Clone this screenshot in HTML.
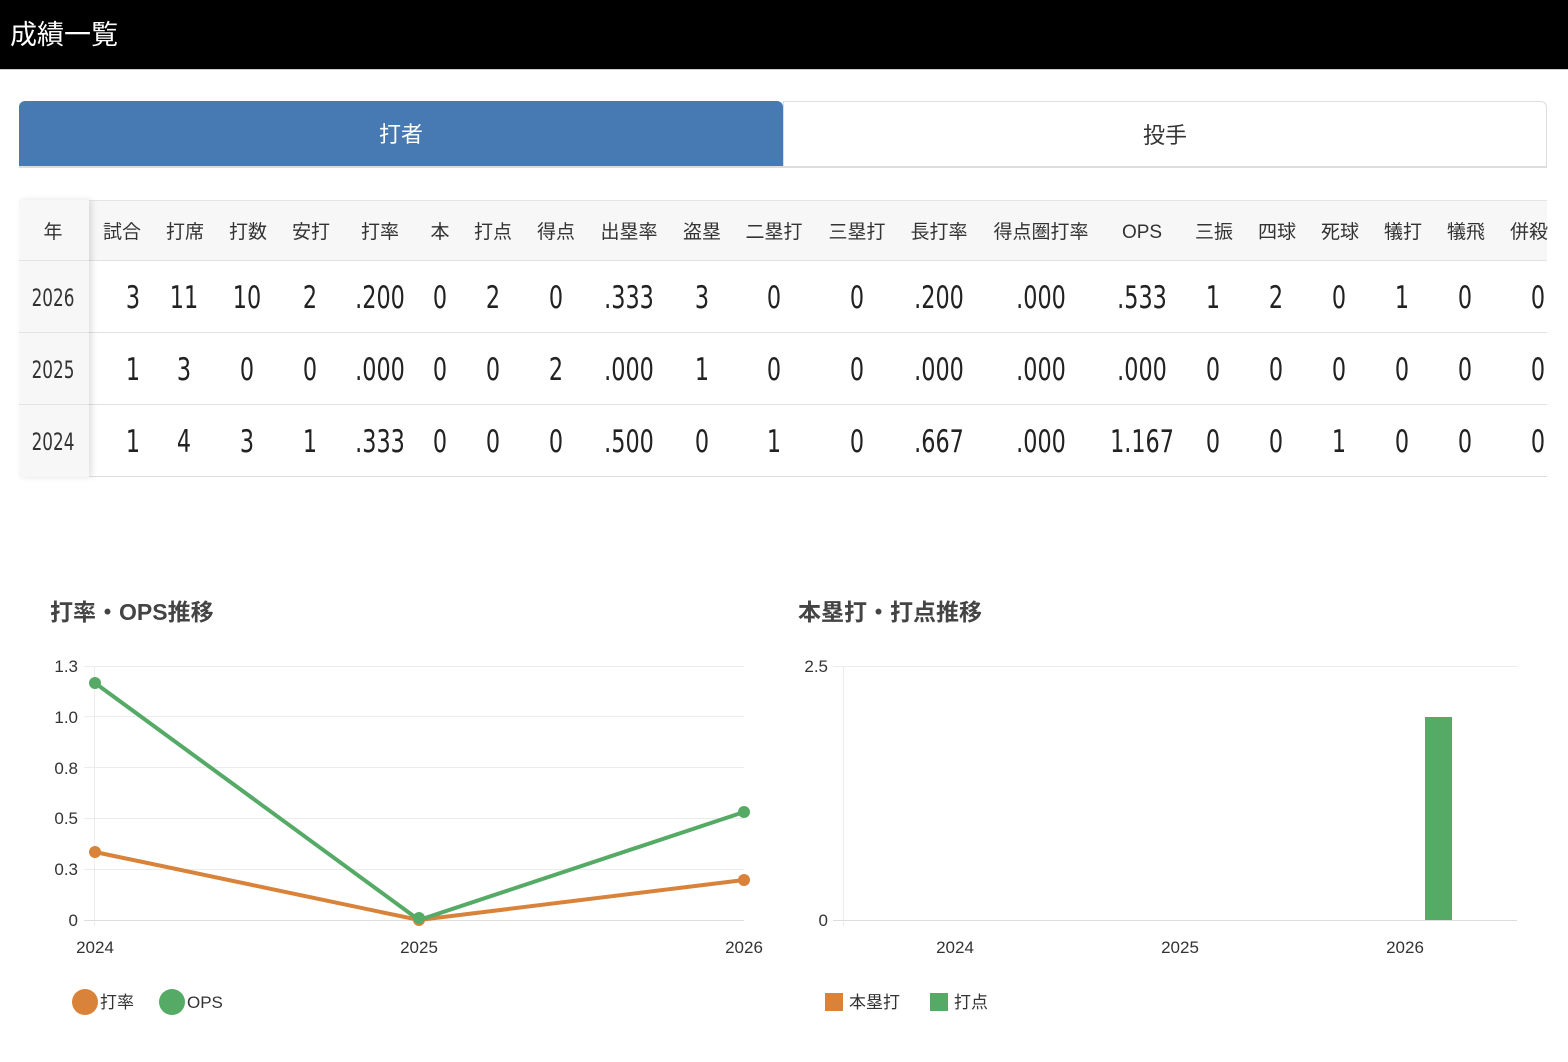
<!DOCTYPE html>
<html><head><meta charset="utf-8"><style>
*{margin:0;padding:0;box-sizing:border-box}
body{width:1568px;height:1062px;background:#fff;position:relative;overflow:hidden;font-family:"Liberation Sans","Noto Sans CJK JP",sans-serif;color:#333}
.top{position:absolute;left:0;top:0;width:1568px;height:70px;background:#000;border-bottom:1px solid #ccc}
.top span{position:absolute;left:10px;top:13px;color:#fff;font-size:27px}
.tab{position:absolute;top:101px;height:67px;font-size:22px;text-align:center;line-height:67px}
.a{position:absolute;white-space:nowrap;transform:translateX(-50%)}
.h{top:217px;font-size:19px;color:#333}
.n{font-family:"DejaVu Sans Condensed","DejaVu Sans",sans-serif;font-size:31px;color:#222;transform:translateX(-50%) scaleX(0.8)}
.y{font-family:"DejaVu Sans Condensed","DejaVu Sans",sans-serif;font-size:24px;color:#333;transform:translateX(-50%) scaleX(0.78)}
.line{position:absolute;left:19px;width:1528px;height:1px;background:#e2e2e2}
</style></head><body>
<div class="top"><span>成績一覧</span></div>
<div class="tab" style="left:19px;width:764px;background:#4779b2;color:#fff;border-radius:6px 6px 0 0;border-bottom:2px solid #ddd">打者</div>
<div class="tab" style="left:783px;width:764px;border:1px solid #ddd;border-bottom:2px solid #ddd;border-radius:0 6px 0 0;color:#333">投手</div>

<div style="position:absolute;left:19px;top:200px;width:1528px;height:60px;background:#f7f7f7;border-top:1px solid #e5e5e5"></div>
<div class="line" style="top:260px"></div>
<div class="line" style="top:332px"></div>
<div class="line" style="top:404px"></div>
<div class="line" style="top:476px;background:#ddd"></div>
<div style="position:absolute;left:19px;top:200px;width:70px;height:277px;background:#f7f7f7;box-shadow:3px 0 6px rgba(0,0,0,0.12)"></div>
<div style="position:absolute;left:19px;top:260px;width:70px;height:1px;background:#e2e2e2"></div>
<div style="position:absolute;left:19px;top:332px;width:70px;height:1px;background:#e2e2e2"></div>
<div style="position:absolute;left:19px;top:404px;width:70px;height:1px;background:#e2e2e2"></div>

<div class="a h" style="left:53px">年</div>
<div class="a h" style="left:122px">試合</div>
<div class="a h" style="left:185px">打席</div>
<div class="a h" style="left:248px">打数</div>
<div class="a h" style="left:311px">安打</div>
<div class="a h" style="left:380px">打率</div>
<div class="a h" style="left:440px">本</div>
<div class="a h" style="left:493px">打点</div>
<div class="a h" style="left:556px">得点</div>
<div class="a h" style="left:629px">出塁率</div>
<div class="a h" style="left:702px">盗塁</div>
<div class="a h" style="left:774px">二塁打</div>
<div class="a h" style="left:857px">三塁打</div>
<div class="a h" style="left:939px">長打率</div>
<div class="a h" style="left:1041px">得点圏打率</div>
<div class="a h" style="left:1142px;top:222px">OPS</div>
<div class="a h" style="left:1214px">三振</div>
<div class="a h" style="left:1277px">四球</div>
<div class="a h" style="left:1340px">死球</div>
<div class="a h" style="left:1403px">犠打</div>
<div class="a h" style="left:1466px">犠飛</div>
<div class="a h" style="left:1529px">併殺</div>

<div class="a y" style="left:53px;top:284px">2026</div>
<div class="a y" style="left:53px;top:356px">2025</div>
<div class="a y" style="left:53px;top:428px">2024</div>

<!-- row 2026 -->
<div class="a n" style="top:280px;left:133px">3</div><div class="a n" style="top:280px;left:184px">11</div><div class="a n" style="top:280px;left:247px">10</div><div class="a n" style="top:280px;left:310px">2</div><div class="a n" style="top:280px;left:380px">.200</div><div class="a n" style="top:280px;left:440px">0</div><div class="a n" style="top:280px;left:493px">2</div><div class="a n" style="top:280px;left:556px">0</div><div class="a n" style="top:280px;left:629px">.333</div><div class="a n" style="top:280px;left:702px">3</div><div class="a n" style="top:280px;left:774px">0</div><div class="a n" style="top:280px;left:857px">0</div><div class="a n" style="top:280px;left:939px">.200</div><div class="a n" style="top:280px;left:1041px">.000</div><div class="a n" style="top:280px;left:1142px">.533</div><div class="a n" style="top:280px;left:1213px">1</div><div class="a n" style="top:280px;left:1276px">2</div><div class="a n" style="top:280px;left:1339px">0</div><div class="a n" style="top:280px;left:1402px">1</div><div class="a n" style="top:280px;left:1465px">0</div><div class="a n" style="top:280px;left:1538px">0</div>
<!-- row 2025 -->
<div class="a n" style="top:352px;left:133px">1</div><div class="a n" style="top:352px;left:184px">3</div><div class="a n" style="top:352px;left:247px">0</div><div class="a n" style="top:352px;left:310px">0</div><div class="a n" style="top:352px;left:380px">.000</div><div class="a n" style="top:352px;left:440px">0</div><div class="a n" style="top:352px;left:493px">0</div><div class="a n" style="top:352px;left:556px">2</div><div class="a n" style="top:352px;left:629px">.000</div><div class="a n" style="top:352px;left:702px">1</div><div class="a n" style="top:352px;left:774px">0</div><div class="a n" style="top:352px;left:857px">0</div><div class="a n" style="top:352px;left:939px">.000</div><div class="a n" style="top:352px;left:1041px">.000</div><div class="a n" style="top:352px;left:1142px">.000</div><div class="a n" style="top:352px;left:1213px">0</div><div class="a n" style="top:352px;left:1276px">0</div><div class="a n" style="top:352px;left:1339px">0</div><div class="a n" style="top:352px;left:1402px">0</div><div class="a n" style="top:352px;left:1465px">0</div><div class="a n" style="top:352px;left:1538px">0</div>
<!-- row 2024 -->
<div class="a n" style="top:424px;left:133px">1</div><div class="a n" style="top:424px;left:184px">4</div><div class="a n" style="top:424px;left:247px">3</div><div class="a n" style="top:424px;left:310px">1</div><div class="a n" style="top:424px;left:380px">.333</div><div class="a n" style="top:424px;left:440px">0</div><div class="a n" style="top:424px;left:493px">0</div><div class="a n" style="top:424px;left:556px">0</div><div class="a n" style="top:424px;left:629px">.500</div><div class="a n" style="top:424px;left:702px">0</div><div class="a n" style="top:424px;left:774px">1</div><div class="a n" style="top:424px;left:857px">0</div><div class="a n" style="top:424px;left:939px">.667</div><div class="a n" style="top:424px;left:1041px">.000</div><div class="a n" style="top:424px;left:1142px">1.167</div><div class="a n" style="top:424px;left:1213px">0</div><div class="a n" style="top:424px;left:1276px">0</div><div class="a n" style="top:424px;left:1339px">1</div><div class="a n" style="top:424px;left:1402px">0</div><div class="a n" style="top:424px;left:1465px">0</div><div class="a n" style="top:424px;left:1538px">0</div>

<svg width="1568" height="1062" style="position:absolute;left:0;top:0" font-family="Liberation Sans, Noto Sans CJK JP, sans-serif">
<text x="50" y="620" font-size="23" font-weight="bold" fill="#444">打率・OPS推移</text>
<text x="798" y="620" font-size="23" font-weight="bold" fill="#444">本塁打・打点推移</text>
<g stroke="#ececec" stroke-width="1">
<line x1="84" y1="666.5" x2="744" y2="666.5"/><line x1="84" y1="716.5" x2="744" y2="716.5"/><line x1="84" y1="767.5" x2="744" y2="767.5"/><line x1="84" y1="818.5" x2="744" y2="818.5"/><line x1="84" y1="869.5" x2="744" y2="869.5"/>
<line x1="94.5" y1="666" x2="94.5" y2="926"/>
<line x1="833" y1="666.5" x2="1517" y2="666.5"/><line x1="843.5" y1="666" x2="843.5" y2="926"/>
</g>
<line x1="84" y1="920.5" x2="744" y2="920.5" stroke="#ddd"/>
<line x1="833" y1="920.5" x2="1517" y2="920.5" stroke="#ddd"/>
<g font-size="17" fill="#333" text-anchor="end">
<text x="78" y="672">1.3</text><text x="78" y="723">1.0</text><text x="78" y="774">0.8</text><text x="78" y="824">0.5</text><text x="78" y="875">0.3</text><text x="78" y="926">0</text>
<text x="828" y="672">2.5</text><text x="828" y="926">0</text>
</g>
<g font-size="17" fill="#333" text-anchor="middle">
<text x="95" y="953">2024</text><text x="419" y="953">2025</text><text x="744" y="953">2026</text>
<text x="955" y="953">2024</text><text x="1180" y="953">2025</text><text x="1405" y="953">2026</text>
</g>
<polyline points="95,852 419,920 744,880" fill="none" stroke="#d9823a" stroke-width="4"/>
<polyline points="95,683 419,920 744,812" fill="none" stroke="#55aa66" stroke-width="4"/>
<g fill="#d9823a"><circle cx="95" cy="852" r="6"/><circle cx="419" cy="920" r="6"/><circle cx="744" cy="880" r="6"/></g>
<g fill="#55aa66"><circle cx="95" cy="683" r="6"/><circle cx="419" cy="918" r="6"/><circle cx="744" cy="812" r="6"/></g>
<rect x="1425" y="717" width="27" height="203" fill="#55aa66"/>
<circle cx="85" cy="1002" r="13" fill="#d9823a"/><text x="100" y="1008" font-size="17" fill="#333">打率</text>
<circle cx="172" cy="1002" r="13" fill="#55aa66"/><text x="187" y="1008" font-size="17" fill="#333">OPS</text>
<rect x="825" y="993" width="18" height="18" fill="#d9823a"/><text x="849" y="1008" font-size="17" fill="#333">本塁打</text>
<rect x="930" y="993" width="18" height="18" fill="#55aa66"/><text x="954" y="1008" font-size="17" fill="#333">打点</text>
</svg>
</body></html>
